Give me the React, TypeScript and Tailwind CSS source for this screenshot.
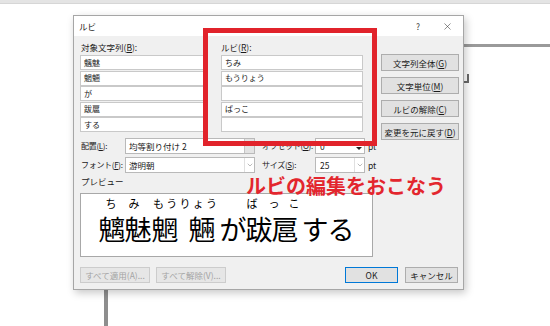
import { X, ChevronDown } from 'lucide-react'

const rows = [
  { base: '魑魅', ruby: 'ちみ' },
  { base: '魍魎', ruby: 'もうりょう' },
  { base: 'が', ruby: '' },
  { base: '跋扈', ruby: 'ばっこ' },
  { base: 'する', ruby: '' },
]

const sideButtons = [
  ['文字列全体', 'G'],
  ['文字単位', 'M'],
  ['ルビの解除', 'C'],
  ['変更を元に戻す', 'D'],
]

// プレビューの文字位置（均等割り付け 2 の見た目を再現）
const baseChars = [
  { ch: '魑', cls: 'ml-[18px]' },
  { ch: '魅', cls: '' },
  { ch: '魍', cls: 'ml-px' },
  { ch: '魎', cls: 'ml-[11px]' },
  { ch: 'が', cls: 'ml-[5px]' },
  { ch: '跋', cls: '' },
  { ch: '扈', cls: '' },
  { ch: 'す', cls: 'ml-[4px]' },
  { ch: 'る', cls: '' },
]

function Label({ text, k }: { text: string; k: string }) {
  return (
    <span className="whitespace-nowrap">
      {text}(<span className="underline">{k}</span>):
    </span>
  )
}

export default function App() {
  return (
    <div className="relative w-[550px] h-[326px] overflow-hidden bg-white font-['Noto_Sans_CJK_JP',sans-serif] text-[8.5px] leading-[12px] text-[#1a1a1a]">
      <div className="h-[4px] bg-[#e4e4e4] border-b border-[#d6d6d6]" />

      {/* ページの枠線 */}
      <div className="absolute left-[464px] top-[44px] w-[86px] h-[3px] bg-[#9a9a9a]" />
      <div className="absolute left-[467px] top-[74px] w-[2px] h-[9px] bg-[#6a6a6a]" />
      <div className="absolute left-[464px] top-[81px] w-[5px] h-[2px] bg-[#6a6a6a]" />
      <div className="absolute left-[104px] top-[280px] w-[4px] h-[50px] bg-[#8e8e8e]" />

      {/* ダイアログ */}
      <div className="relative ml-[73px] mt-[11px] w-[391px] h-[275px] bg-[#f0f0f0] border border-[#a6a6a6] shadow-[2px_3px_8px_rgba(0,0,0,0.22)] flex flex-col">
        <div className="h-[20px] bg-white flex items-center pl-[5px] pr-[10px]">
          <span>ルビ</span>
          <span className="ml-auto mr-[22px] text-[#444]">?</span>
          <X size={11} strokeWidth={1.2} className="text-[#333]" />
        </div>

        <div className="flex-1 flex flex-col pl-[6px] pt-[5px]">
          <div className="flex items-start h-[91px]">
            <div className="grid grid-cols-[126px_142px] gap-x-[15px]">
              <div className="pl-px"><Label text="対象文字列" k="B" /></div>
              <div><Label text="ルビ" k="R" /></div>
              <div className="col-span-2 grid grid-cols-[126px_142px] gap-x-[15px] gap-y-[0.5px] mt-[2px]">
                {rows.map((r) => (
                  <div key={r.base} className="contents">
                    <div className="h-[15px] bg-white border border-[#c9c9c9] px-[3px] flex items-center text-[8px]">{r.base}</div>
                    <div className="h-[15px] bg-white border border-[#c9c9c9] px-[3px] flex items-center text-[8px]">{r.ruby}</div>
                  </div>
                ))}
              </div>
            </div>

            <div className="ml-[18px] mt-[13px] flex flex-col gap-[6px]">
              {sideButtons.map(([t, k]) => (
                <div key={k} className="w-[78px] h-[17px] bg-[#e1e1e1] border border-[#adadad] flex items-center justify-center whitespace-nowrap">
                  <span>{t}(<span className="underline">{k}</span>)</span>
                </div>
              ))}
            </div>
          </div>

          <div className="mt-[6px] flex flex-col gap-[3px]">
            <div className="flex items-center h-[16px]">
              <div className="w-[45px] pl-px text-[8px] tracking-[-0.3px]"><Label text="配置" k="L" /></div>
              <div className="w-[130px] h-[16px] bg-white border border-[#b9b9b9] flex items-center">
                <span className="pl-[3px] flex-1 whitespace-nowrap">均等割り付け 2</span>
                <div className="w-[10px] h-full bg-[#e3e3e3] border-l border-[#c4c4c4]" />
              </div>
              <div className="ml-[7px] w-[53px] text-[8px] tracking-[-0.3px]"><Label text="オフセット" k="O" /></div>
              <div className="w-[50px] h-[16px] bg-white border border-[#b9b9b9] flex items-center">
                <span className="pl-[4px] flex-1">0</span>
                <div className="w-[10px] h-full flex items-end justify-center pb-[3px]">
                  <div className="w-0 h-0 border-l-[3px] border-r-[3px] border-t-[3px] border-l-transparent border-r-transparent border-t-[#222]" />
                </div>
              </div>
              <span className="ml-[3px]">pt</span>
            </div>
            <div className="flex items-center h-[16px]">
              <div className="w-[45px] pl-px text-[8px] tracking-[-0.3px]"><Label text="フォント" k="F" /></div>
              <div className="w-[130px] h-[16px] bg-white border border-[#b9b9b9] flex items-center">
                <span className="pl-[3px] flex-1">游明朝</span>
                <div className="w-[10px] h-full border-l border-[#e0e0e0] flex items-center justify-center">
                  <ChevronDown size={8} strokeWidth={1.5} className="text-[#777]" />
                </div>
              </div>
              <div className="ml-[7px] w-[53px] text-[8px] tracking-[-0.3px]"><Label text="サイズ" k="S" /></div>
              <div className="w-[50px] h-[16px] bg-white border border-[#b9b9b9] flex items-center">
                <span className="pl-[4px] flex-1">25</span>
                <div className="w-[10px] h-full border-l border-[#e0e0e0] flex items-center justify-center">
                  <ChevronDown size={8} strokeWidth={1.5} className="text-[#777]" />
                </div>
              </div>
              <span className="ml-[3px]">pt</span>
            </div>
          </div>

          <div className="mt-[2px] pl-px">プレビュー</div>

          <div className="mt-[6px] w-[293px] h-[64px] bg-white border border-[#a8a8a8] flex flex-col text-black">
            <div className="flex mt-[3px] h-[12px] text-[11px] leading-[12px]">
              <span className="ml-[24px] w-[12px] text-center">ち</span>
              <span className="ml-[11px] w-[12px] text-center">み</span>
              <span className="ml-[13px] w-[64px] flex justify-between">
                <span>も</span><span>う</span><span>り</span><span>ょ</span><span>う</span>
              </span>
              <span className="ml-[29px] w-[12px] text-center">ば</span>
              <span className="ml-[10px] w-[12px] text-center">っ</span>
              <span className="ml-[8px] w-[12px] text-center">こ</span>
            </div>
            <div className="flex mt-[6px] text-[27px] leading-[27px]">
              {baseChars.map((c, i) => (
                <span key={i} className={`w-[26px] flex justify-center ${c.cls}`}>{c.ch}</span>
              ))}
            </div>
          </div>

          <div className="mt-[10px] flex whitespace-nowrap">
            <div className="w-[70px] h-[16px] bg-[#e6e6e6] border border-[#cccccc] text-[#a3a3a3] flex items-center justify-center">すべて適用(A)...</div>
            <div className="ml-[6px] w-[70px] h-[16px] bg-[#e6e6e6] border border-[#cccccc] text-[#a3a3a3] flex items-center justify-center">すべて解除(V)...</div>
            <div className="ml-auto w-[53px] h-[16px] bg-[#e1e1e1] border border-[#0078d7] flex items-center justify-center">OK</div>
            <div className="ml-[7px] mr-[5px] w-[53px] h-[16px] bg-[#e1e1e1] border border-[#adadad] flex items-center justify-center">キャンセル</div>
          </div>
        </div>
      </div>

      {/* 注釈 */}
      <div className="absolute left-[203px] top-[28px] w-[174px] h-[118px] border-[5px] border-[#e1232b]" />
      <div className="absolute left-[246px] top-[175px] text-[20px] leading-[21px] font-bold text-[#e3262e]">ルビの編集をおこなう</div>
    </div>
  )
}
